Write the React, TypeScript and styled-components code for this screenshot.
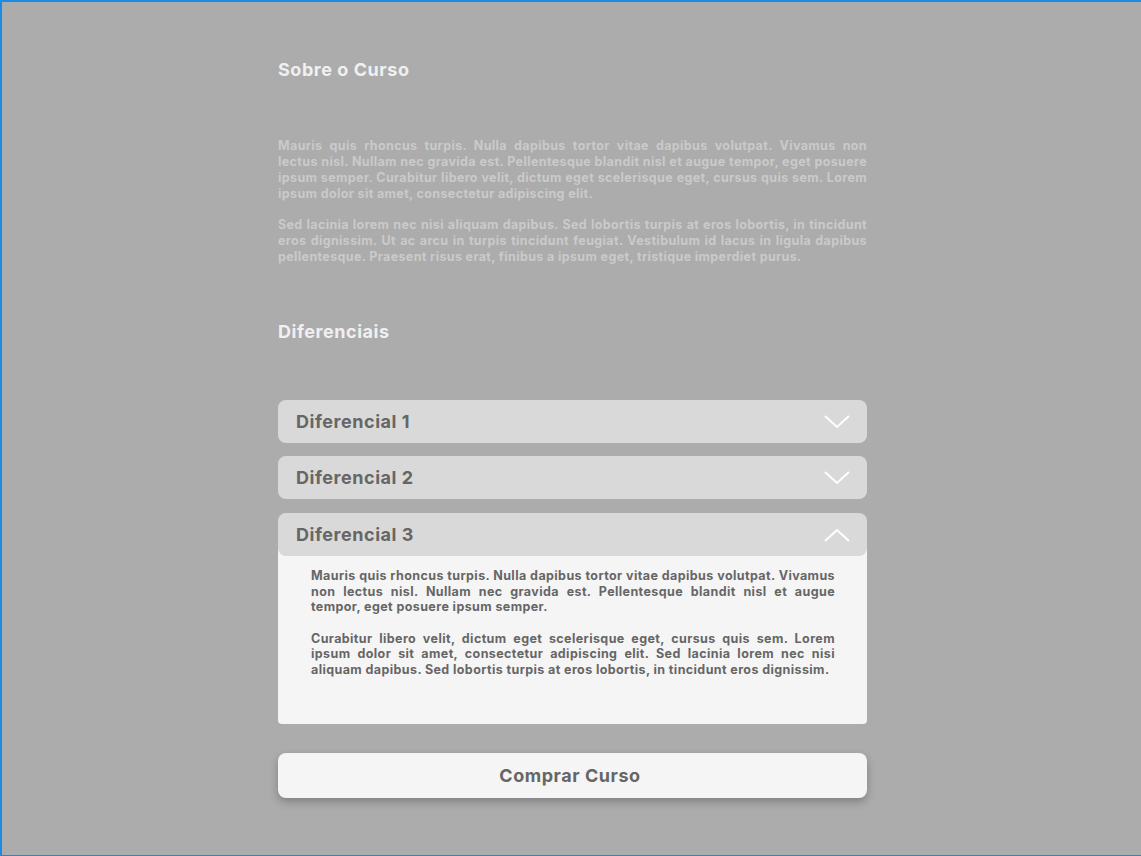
import styled, { createGlobalStyle } from 'styled-components';

const GlobalStyle = createGlobalStyle`
  html, body { margin: 0; padding: 0; }
  body { font-family: Inter, "Noto Sans", sans-serif; }
`;

const Page = styled.div`
  box-sizing: border-box;
  width: 1141px;
  height: 856px;
  background: #acacac;
  border-top: 2px solid #1a8ae6;
  border-left: 2px solid #1a8ae6;
  border-bottom: 1px solid #1a8ae6;
  padding: 57px 0 0 276px;
  overflow: hidden;
`;

const Column = styled.main`
  width: 589px;
  display: flex;
  flex-direction: column;
`;

const Heading = styled.h2<{ $gap: number }>`
  margin: 0 0 ${p => p.$gap}px;
  font-size: 18px;
  line-height: 22px;
  font-weight: 700;
  letter-spacing: 0.55px;
  color: #f0f0f0;
`;

const Intro = styled.p<{ $last?: boolean }>`
  margin: 0 0 ${p => (p.$last ? 56 : 15)}px;
  font-size: 12.5px;
  line-height: 16px;
  font-weight: 700;
  letter-spacing: 0.37px;
  color: #cacaca;
  text-align: justify;
`;

const Accordion = styled.div`
  display: flex;
  flex-direction: column;
`;

const Item = styled.div<{ $gap: number }>`
  display: flex;
  flex-direction: column;
  margin-bottom: ${p => p.$gap}px;
`;

const Header = styled.div`
  position: relative;
  z-index: 1;
  height: 43px;
  display: flex;
  align-items: center;
  justify-content: space-between;
  padding: 0 17px 0 18px;
  background: #d9d9d9;
  border-radius: 8px;
  font-size: 18px;
  font-weight: 700;
  letter-spacing: 0.55px;
  color: #666666;
`;

const Panel = styled.div`
  margin-top: -8px;
  padding: 20px 32px 0 33px;
  height: 176px;
  box-sizing: border-box;
  background: #f5f5f5;
  border-radius: 0 0 4px 4px;
`;

const PanelText = styled.p<{ $last?: boolean }>`
  margin: 0 0 ${p => (p.$last ? 0 : 16)}px;
  font-size: 12.5px;
  line-height: 15.6px;
  font-weight: 700;
  letter-spacing: 0.4px;
  color: #666666;
  text-align: justify;
`;

const BuyButton = styled.button`
  margin-top: 29px;
  height: 45px;
  border: none;
  border-radius: 8px;
  background: #f5f5f5;
  box-shadow: 0 4px 8px rgba(0, 0, 0, 0.25);
  font-family: Inter, "Noto Sans", sans-serif;
  font-size: 18px;
  font-weight: 700;
  letter-spacing: 0.55px;
  color: #666666;
  padding: 0 5px 0 0;
  cursor: pointer;
`;

function Chevron({ up }: { up?: boolean }) {
  return (
    <svg width="26" height="14" viewBox="0 0 26 14" fill="none">
      <path
        d={up ? 'M1 13 L13 2 L25 13' : 'M1 1 L13 12 L25 1'}
        stroke="#ffffff"
        strokeWidth="2"
      />
    </svg>
  );
}

const items = ['Diferencial 1', 'Diferencial 2', 'Diferencial 3'];
const gaps = [13, 14, 0];

export default function App() {
  return (
    <>
      <GlobalStyle />
      <Page>
        <Column>
          <Heading $gap={57}>Sobre o Curso</Heading>
          <Intro>
            Mauris quis rhoncus turpis. Nulla dapibus tortor vitae dapibus volutpat. Vivamus non
            lectus nisl. Nullam nec gravida est. Pellentesque blandit nisl et augue tempor, eget
            posuere ipsum semper. Curabitur libero velit, dictum eget scelerisque eget, cursus quis
            sem. Lorem ipsum dolor sit amet, consectetur adipiscing elit.
          </Intro>
          <Intro $last>
            Sed lacinia lorem nec nisi aliquam dapibus. Sed lobortis turpis at eros lobortis, in
            tincidunt eros dignissim. Ut ac arcu in turpis tincidunt feugiat. Vestibulum id lacus in
            ligula dapibus pellentesque. Praesent risus erat, finibus a ipsum eget, tristique
            imperdiet purus.
          </Intro>
          <Heading $gap={57}>Diferenciais</Heading>
          <Accordion>
            {items.map((label, i) => {
              const open = i === items.length - 1;
              return (
                <Item key={label} $gap={gaps[i]}>
                  <Header>
                    {label}
                    <Chevron up={open} />
                  </Header>
                  {open && (
                    <Panel>
                      <PanelText>
                        Mauris quis rhoncus turpis. Nulla dapibus tortor vitae dapibus volutpat.
                        Vivamus non lectus nisl. Nullam nec gravida est. Pellentesque blandit nisl
                        et augue tempor, eget posuere ipsum semper.
                      </PanelText>
                      <PanelText $last>
                        Curabitur libero velit, dictum eget scelerisque eget, cursus quis sem. Lorem
                        ipsum dolor sit amet, consectetur adipiscing elit. Sed lacinia lorem nec nisi
                        aliquam dapibus. Sed lobortis turpis at eros lobortis, in tincidunt eros
                        dignissim.
                      </PanelText>
                    </Panel>
                  )}
                </Item>
              );
            })}
          </Accordion>
          <BuyButton>Comprar Curso</BuyButton>
        </Column>
      </Page>
    </>
  );
}
